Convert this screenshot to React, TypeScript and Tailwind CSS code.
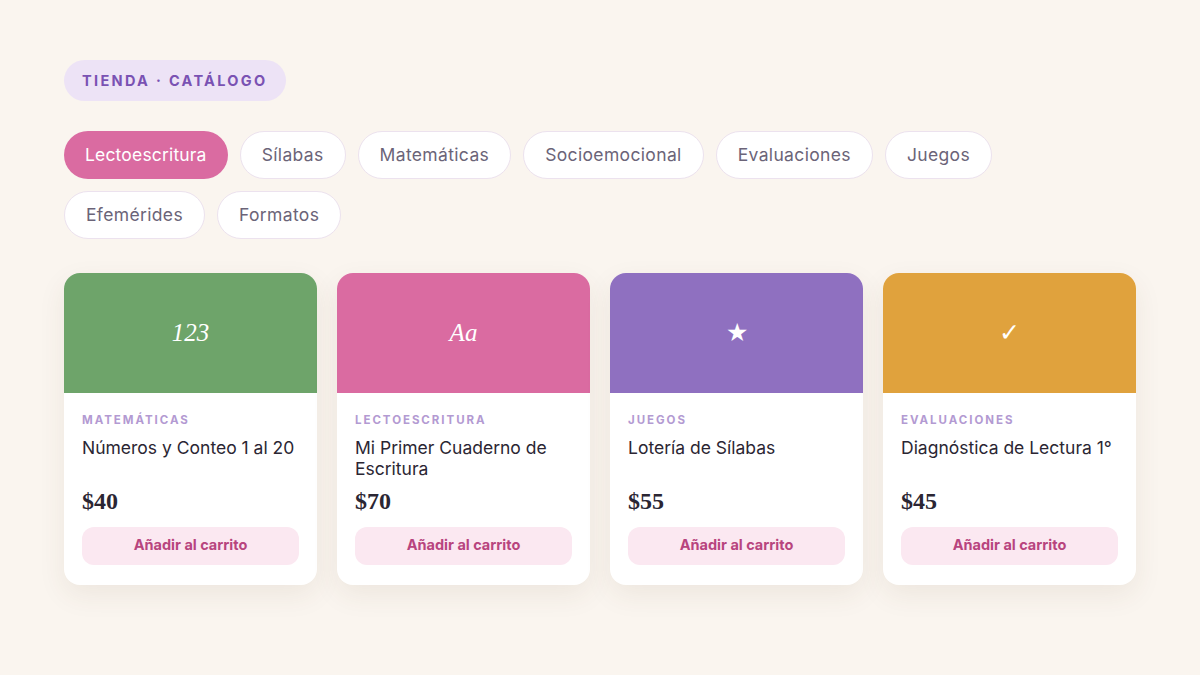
import * as React from "react";

const categories = [
  "Lectoescritura",
  "Sílabas",
  "Matemáticas",
  "Socioemocional",
  "Evaluaciones",
  "Juegos",
  "Efemérides",
  "Formatos",
];

const products = [
  { glyph: "123", italic: true, bg: "bg-[#6ea46a]", cat: "MATEMÁTICAS", title: "Números y Conteo 1 al 20", price: "$40" },
  { glyph: "Aa", italic: true, bg: "bg-[#da6ba1]", cat: "LECTOESCRITURA", title: "Mi Primer Cuaderno de Escritura", price: "$70" },
  { glyph: "★", italic: false, bg: "bg-[#8f70c0]", cat: "JUEGOS", title: "Lotería de Sílabas", price: "$55" },
  { glyph: "✓", italic: false, bg: "bg-[#e0a23d]", cat: "EVALUACIONES", title: "Diagnóstica de Lectura 1°", price: "$45" },
];

const sans = "font-['Inter','Noto_Sans',sans-serif]";

export default function App() {
  const [active, setActive] = React.useState("Lectoescritura");

  return (
    <div className={`min-h-[675px] w-full bg-[#faf5ef] px-16 pt-[60px] ${sans}`}>
      {/* store badge */}
      <div className="inline-flex h-[41px] items-center rounded-full bg-[#ede3f6] px-[18px] text-[14.5px] font-bold tracking-[0.16em] text-[#7a52b3]">
        TIENDA · CATÁLOGO
      </div>

      {/* category filters */}
      <div className="mt-[30px] flex max-w-[940px] flex-wrap gap-3">
        {categories.map((c) => (
          <button
            key={c}
            onClick={() => setActive(c)}
            className={
              c === active
                ? "h-12 rounded-full bg-[#da6ba1] px-[21px] text-[17.5px] tracking-[0.01em] text-white"
                : "h-12 rounded-full border border-[#ece2ee] bg-white px-[21px] text-[17.5px] tracking-[0.02em] text-[#6b6478]"
            }
          >
            {c}
          </button>
        ))}
      </div>

      {/* product cards */}
      <div className="mt-[34px] grid w-[1072px] grid-cols-4 gap-5">
        {products.map((p) => (
          <div
            key={p.title}
            className="overflow-hidden rounded-2xl bg-white shadow-[0_10px_28px_rgba(90,60,40,0.08)]"
          >
            <div
              className={`flex h-[120px] items-center justify-center ${p.bg} font-['Liberation_Serif',serif] text-[25px] text-white ${p.italic ? "italic" : ""}`}
            >
              {p.glyph}
            </div>
            <div className="px-[18px] pt-[19px] pb-5">
              <div className="text-[11.5px] leading-[17px] font-bold tracking-[0.17em] text-[#b39ad2]">
                {p.cat}
              </div>
              <div className="mt-[8px] h-[43px] text-[17.5px] leading-[21px] text-[#2b2633]">
                {p.title}
              </div>
              <div className="mt-[5px] font-['Liberation_Serif',serif] text-[24px] font-bold leading-8 text-[#2b2633]">
                {p.price}
              </div>
              <button className="mt-[10px] h-[38px] w-full rounded-xl bg-[#fbe8f1] pb-[2px] text-[14.5px] font-bold text-[#b8447e]">
                Añadir al carrito
              </button>
            </div>
          </div>
        ))}
      </div>
    </div>
  );
}
